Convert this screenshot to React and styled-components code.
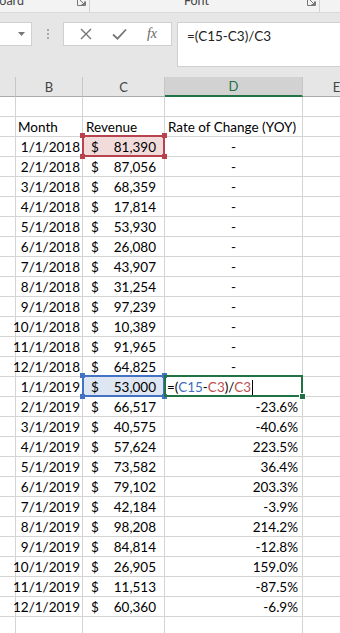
import React from 'react';
import styled, { createGlobalStyle, css } from 'styled-components';

const Global = createGlobalStyle`
  html, body { margin: 0; padding: 0; }
  body {
    width: 340px; height: 633px; overflow: hidden; background: #fff;
    font-family: Lato, "Open Sans", sans-serif; color: #000;
  }
`;

const Page = styled.div`
  width: 340px; height: 633px; overflow: hidden; display: flex; flex-direction: column;
`;

const Ribbon = styled.div`
  height: 12px; flex: none; background: #f3f3f3; border-bottom: 1px solid #d9d9d9;
  display: flex; overflow: hidden;
`;

const RibbonGroup = styled.div`
  width: ${p => p.$w}px; flex: none; display: flex; align-items: flex-start;
  border-right: 1px solid #d2d2d2; box-sizing: border-box; padding-right: 3px;
  overflow: hidden;
`;

const RibbonLabel = styled.span`
  font-size: 12.5px; line-height: 14px; margin-top: -6px; color: #444;
  margin-left: ${p => p.$ml}px; white-space: nowrap; flex: 1;
`;

const Launcher = () => (
  <svg width="9" height="9" viewBox="0 0 9 9" style={{ marginTop: -3, flex: 'none' }}>
    <path d="M0.5 8.5V0.5h4M8.5 4.5v4h-8" fill="none" stroke="#777" strokeWidth="1" />
    <path d="M3 3l4.5 4.5M7.5 4.5v3h-3" fill="none" stroke="#777" strokeWidth="1" />
  </svg>
);

const FormulaBar = styled.div`
  height: 64px; flex: none; background: #e6e6e6; box-sizing: border-box;
  padding-top: 9px; display: flex; align-items: flex-start;
`;

const NameBox = styled.div`
  width: 32px; height: 24px; background: #fff; box-sizing: border-box;
  border: 1px solid #d0d0d0; border-left: none; display: flex; align-items: center;
  justify-content: flex-end; padding-right: 6px;
`;

const Grip = styled.div`
  width: 31px; height: 24px; display: flex; flex-direction: column; align-items: center;
  justify-content: center; gap: 2px;
  span { width: 2px; height: 2px; background: #a8a8a8; }
`;

const FxButtons = styled.div`
  width: 109px; height: 24px; background: #fff; box-sizing: border-box;
  border: 1px solid #d0d0d0; display: flex; align-items: center; justify-content: space-around;
  padding: 0 4px 0 6px;
`;

const FxText = styled.span`
  font-family: "Liberation Serif", serif; font-style: italic; font-size: 14px; color: #666;
`;

const FormulaInput = styled.div`
  margin-left: 5px; flex: 1; height: 45px; background: #fff; box-sizing: border-box;
  border: 1px solid #d0d0d0; border-right: none; padding: 5px 0 0 9px;
  font-size: 13.5px; line-height: 16px; color: #222;
`;

const COLS = '16px 67px 82px 138px 68px';

const HeaderRow = styled.div`
  display: grid; grid-template-columns: ${COLS}; height: 20px; flex: none;
  background: #e6e6e6;
`;

const HeaderCell = styled.div`
  box-sizing: border-box; border-right: 1px solid #c6c6c6; border-bottom: 1px solid #ababab;
  display: flex; align-items: center; justify-content: center; font-size: 13px; color: #444;
  ${p => p.$active && css`
    background: #d2d2d2; color: #217346; border-bottom: 2px solid #217346;
  `}
`;

const Row = styled.div`
  display: grid; grid-template-columns: ${COLS}; height: 20px; flex: none;
`;

const Cell = styled.div`
  position: relative; box-sizing: border-box; border-right: 1px solid #d4d4d4;
  border-bottom: 1px solid #d4d4d4; display: flex; align-items: center;
  font-size: 13.5px; white-space: nowrap; padding: 0 3px;
  justify-content: ${p => p.$align === 'right' ? 'flex-end' : p.$align === 'center' ? 'center' : 'flex-start'};
  padding-right: ${p => p.$pr ?? 3}px;
  padding-left: ${p => p.$pl ?? 3}px;
  background: ${p => p.$fill || 'transparent'};
  ${p => p.$currency && css` justify-content: space-between; `}
`;

const Frame = styled.div`
  position: absolute; top: -2px; left: -1px; right: -1px; bottom: -1px;
  border: 2px solid ${p => p.$color}; pointer-events: none; z-index: 2;
`;

const Handle = styled.span`
  position: absolute; width: 5px; height: 5px; background: ${p => p.$color};
  ${p => p.$pos.includes('t') ? 'top: -4px;' : 'bottom: -4px;'}
  ${p => p.$pos.includes('l') ? 'left: -4px;' : 'right: -4px;'}
`;

const FillHandle = styled.span`
  position: absolute; width: 5px; height: 5px; background: #217346;
  right: -4px; bottom: -4px; outline: 1px solid #fff;
`;

const Ref = styled.span`
  color: ${p => p.$c === 'blue' ? '#3f6fc0' : '#c0504d'};
`;

const Caret = styled.span`
  display: inline-block; width: 1px; height: 15px; background: #000; margin-left: 1px;
  vertical-align: -3px;
`;

const Highlight = ({ color }) => (
  <Frame $color={color}>
    {['tl', 'tr', 'bl', 'br'].map(p => <Handle key={p} $pos={p} $color={color} />)}
  </Frame>
);

const data = [
  ['1/1/2018', '81,390', '-'], ['2/1/2018', '87,056', '-'], ['3/1/2018', '68,359', '-'],
  ['4/1/2018', '17,814', '-'], ['5/1/2018', '53,930', '-'], ['6/1/2018', '26,080', '-'],
  ['7/1/2018', '43,907', '-'], ['8/1/2018', '31,254', '-'], ['9/1/2018', '97,239', '-'],
  ['10/1/2018', '10,389', '-'], ['11/1/2018', '91,965', '-'], ['12/1/2018', '64,825', '-'],
  ['1/1/2019', '53,000', null], ['2/1/2019', '66,517', '-23.6%'], ['3/1/2019', '40,575', '-40.6%'],
  ['4/1/2019', '57,624', '223.5%'], ['5/1/2019', '73,582', '36.4%'], ['6/1/2019', '79,102', '203.3%'],
  ['7/1/2019', '42,184', '-3.9%'], ['8/1/2019', '98,208', '214.2%'], ['9/1/2019', '84,814', '-12.8%'],
  ['10/1/2019', '26,905', '159.0%'], ['11/1/2019', '11,513', '-87.5%'], ['12/1/2019', '60,360', '-6.9%'],
];

export default function App() {
  return (
    <Page>
      <Global />
      <Ribbon>
        <RibbonGroup $w={90}>
          <RibbonLabel $ml={-29}>Clipboard</RibbonLabel>
          <Launcher />
        </RibbonGroup>
        <RibbonGroup $w={230}>
          <RibbonLabel $ml={94}>Font</RibbonLabel>
          <Launcher />
        </RibbonGroup>
      </Ribbon>
      <FormulaBar>
        <NameBox>
          <svg width="7" height="4" viewBox="0 0 7 4"><path d="M0 0h7L3.5 4z" fill="#777" /></svg>
        </NameBox>
        <Grip><span /><span /><span /></Grip>
        <FxButtons>
          <svg width="12" height="12" viewBox="0 0 12 12">
            <path d="M1 1l10 10M11 1L1 11" stroke="#777" strokeWidth="1.4" fill="none" />
          </svg>
          <svg width="15" height="12" viewBox="0 0 15 12">
            <path d="M1 6.5l4.5 4.2L14 1.5" stroke="#777" strokeWidth="1.8" fill="none" />
          </svg>
          <FxText>fx</FxText>
        </FxButtons>
        <FormulaInput>=(C15-C3)/C3</FormulaInput>
      </FormulaBar>
      <HeaderRow>
        <HeaderCell />
        <HeaderCell>B</HeaderCell>
        <HeaderCell>C</HeaderCell>
        <HeaderCell $active>D</HeaderCell>
        <HeaderCell>E</HeaderCell>
      </HeaderRow>
      <Row>
        <Cell /><Cell /><Cell /><Cell /><Cell />
      </Row>
      <Row>
        <Cell />
        <Cell $pl={2}>Month</Cell>
        <Cell>Revenue</Cell>
        <Cell>Rate of Change (YOY)</Cell>
        <Cell />
      </Row>
      {data.map(([d, v, r], i) => {
        const first = i === 0;
        const cur = i === 12;
        return (
          <Row key={d}>
            <Cell />
            <Cell $align="right" $pr={2}>{d}</Cell>
            <Cell $currency $pl={8} $pr={8} $fill={first ? '#f2dcdb' : cur ? '#dde6f2' : undefined}>
              <span>$</span><span>{v}</span>
              {first && <Highlight color="#b8434f" />}
              {cur && <Highlight color="#4472c4" />}
            </Cell>
            {r === null ? (
              <Cell $pl={2}>
                <span>=(<Ref $c="blue">C15</Ref>-<Ref $c="red">C3</Ref>)/<Ref $c="red">C3</Ref><Caret /></span>
                <Frame $color="#217346"><FillHandle /></Frame>
              </Cell>
            ) : (
              <Cell $align={r === '-' ? 'center' : 'right'} $pr={r === '-' ? 3 : 4}>{r}</Cell>
            )}
            <Cell />
          </Row>
        );
      })}
      <Row>
        <Cell /><Cell /><Cell /><Cell /><Cell />
      </Row>
    </Page>
  );
}
